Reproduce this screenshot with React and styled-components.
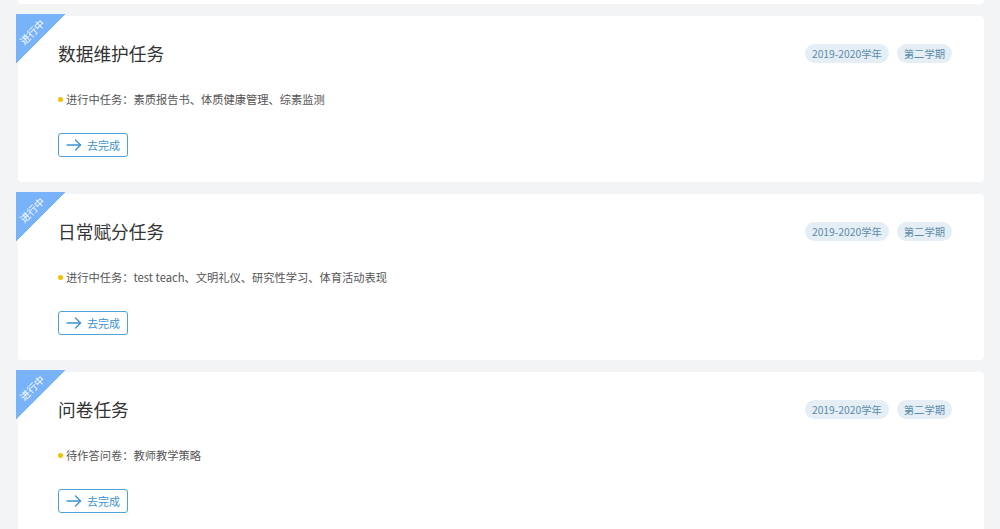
import React from "react";
import styled, { createGlobalStyle } from "styled-components";

const Global = createGlobalStyle`
  html, body { margin: 0; padding: 0; background: #f3f4f6; }
  body { font-family: "Noto Sans CJK SC", "Noto Sans", sans-serif; }
  * { box-sizing: border-box; }
`;

const Page = styled.div`
  width: 1000px;
  height: 529px;
  overflow: hidden;
  padding: 0 16px 0 18px;
  display: flex;
  flex-direction: column;
  gap: 12px;
`;

const PrevTail = styled.div`
  height: 4px;
  flex: none;
  background: #fff;
  border-radius: 0 0 4px 4px;
`;

const Card = styled.section`
  position: relative;
  flex: none;
  background: #fff;
  border-radius: 4px;
  height: 166px;
  padding: 23px 32px 25px 40px;
  display: flex;
  flex-direction: column;
  align-items: flex-start;
`;

const Ribbon = styled.div`
  position: absolute;
  top: -2px;
  left: -2px;
  width: 50px;
  height: 50px;
  background: linear-gradient(135deg, #78b2f8 50%, transparent 50%);
`;

const RibbonText = styled.span`
  position: absolute;
  top: 12px;
  left: 1px;
  width: 30px;
  text-align: center;
  transform: rotate(-45deg);
  color: #fff;
  font-size: 10px;
  line-height: 12px;
  white-space: nowrap;
`;

const Header = styled.div`
  width: 100%;
  height: 28px;
  display: flex;
  align-items: center;
  justify-content: space-between;
`;

const Title = styled.h2`
  margin: 0;
  font-size: 17.7px;
  font-weight: 400;
  color: #333;
  line-height: 28px;
`;

const Tags = styled.div`
  display: flex;
  gap: 8px;
`;

const Tag = styled.span`
  height: 19px;
  padding: 0 7px;
  border-radius: 10px;
  background: #e5eef4;
  color: #5b8cad;
  font-size: 10.3px;
  line-height: 19px;
  white-space: nowrap;
`;

const Info = styled.p`
  margin: 23px 0 0 0;
  display: flex;
  align-items: center;
  gap: 3px;
  font-size: 11.25px;
  line-height: 18px;
  color: #555;
`;

const Dot = styled.i`
  width: 5px;
  height: 5px;
  border-radius: 50%;
  background: #f5c000;
  display: inline-block;
`;

const Button = styled.button`
  margin-top: 25px;
  height: 24px;
  width: 70px;
  padding: 0 0 0 7px;
  display: flex;
  align-items: center;
  gap: 5px;
  background: #fff;
  border: 1px solid #4ea2d9;
  border-radius: 3px;
  color: #3b93d1;
  font-family: inherit;
  font-size: 11px;
  cursor: pointer;
`;

const Arrow = () => (
  <svg width="16" height="12" viewBox="0 0 16 12" fill="none" stroke="#3b93d1" strokeWidth="1.3" strokeLinecap="round" strokeLinejoin="round">
    <path d="M1 6h13.5" />
    <path d="M9.5 1l5 5-5 5" />
  </svg>
);

const tasks = [
  { title: "数据维护任务", info: "进行中任务：素质报告书、体质健康管理、综素监测" },
  { title: "日常赋分任务", info: "进行中任务：test teach、文明礼仪、研究性学习、体育活动表现" },
  { title: "问卷任务", info: "待作答问卷：教师教学策略" },
];

export default function App() {
  return (
    <>
      <Global />
      <Page>
        <PrevTail />
        {tasks.map((t) => (
          <Card key={t.title}>
            <Ribbon>
              <RibbonText>进行中</RibbonText>
            </Ribbon>
            <Header>
              <Title>{t.title}</Title>
              <Tags>
                <Tag>2019-2020学年</Tag>
                <Tag>第二学期</Tag>
              </Tags>
            </Header>
            <Info>
              <Dot />
              {t.info}
            </Info>
            <Button>
              <Arrow />
              去完成
            </Button>
          </Card>
        ))}
      </Page>
    </>
  );
}
